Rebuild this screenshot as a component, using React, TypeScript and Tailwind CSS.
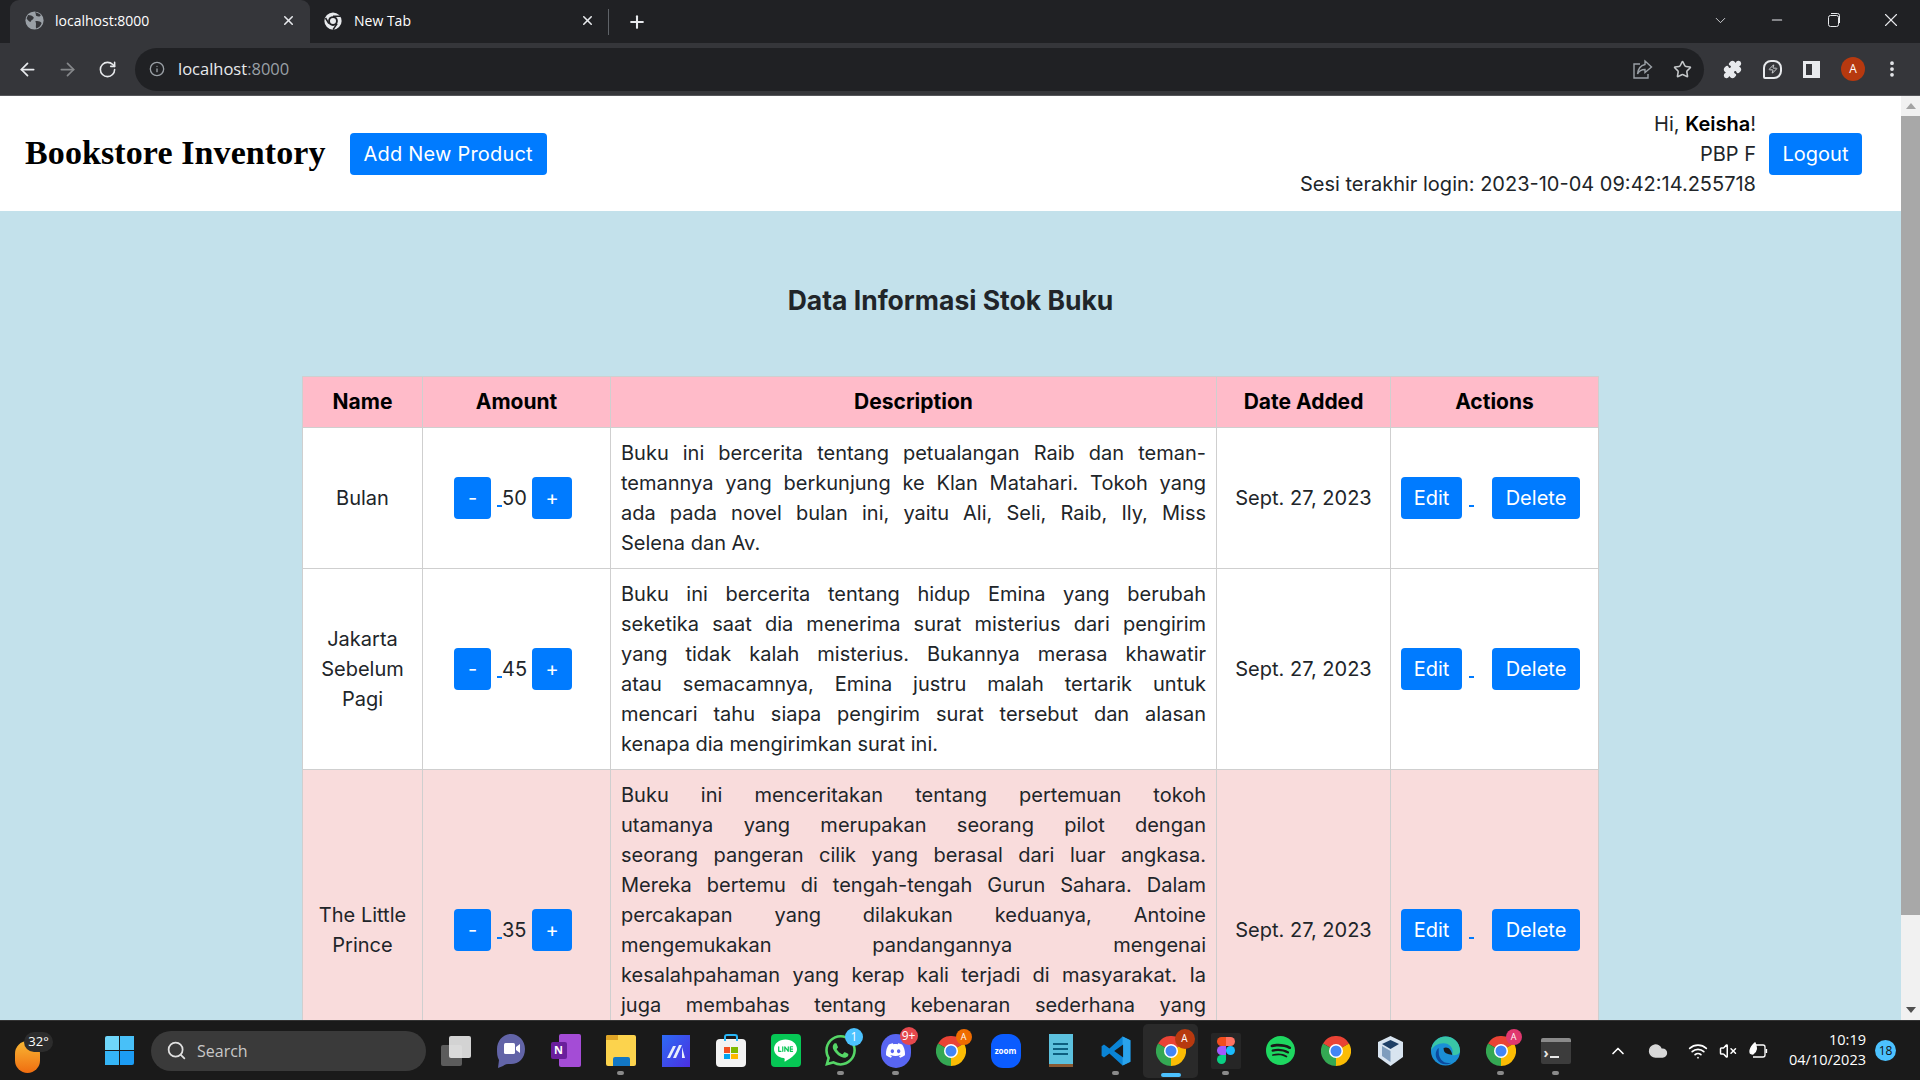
import React from 'react';
import {
    ArrowLeft, ArrowRight, RotateCw, Info, Star, Puzzle, EllipsisVertical, Minus, X, ChevronDown, Plus,
    Search, ChevronUp, Wifi, VolumeX, Cloud, Zap,
} from 'lucide-react';
import { SiDiscord, SiLine, SiSpotify, SiWhatsapp } from 'react-icons/si';

const books = [
    {
        name: ['Bulan'],
        amount: 50,
        lines: [
            'Buku ini bercerita tentang petualangan Raib dan teman-',
            'temannya yang berkunjung ke Klan Matahari. Tokoh yang',
            'ada pada novel bulan ini, yaitu Ali, Seli, Raib, Ily, Miss',
            'Selena dan Av.',
        ],
        rowClass: 'bg-white',
    },
    {
        name: ['Jakarta', 'Sebelum', 'Pagi'],
        amount: 45,
        lines: [
            'Buku ini bercerita tentang hidup Emina yang berubah',
            'seketika saat dia menerima surat misterius dari pengirim',
            'yang tidak kalah misterius. Bukannya merasa khawatir',
            'atau semacamnya, Emina justru malah tertarik untuk',
            'mencari tahu siapa pengirim surat tersebut dan alasan',
            'kenapa dia mengirimkan surat ini.',
        ],
        rowClass: 'bg-white',
    },
    {
        name: ['The Little', 'Prince'],
        amount: 35,
        lines: [
            'Buku ini menceritakan tentang pertemuan tokoh',
            'utamanya yang merupakan seorang pilot dengan',
            'seorang pangeran cilik yang berasal dari luar angkasa.',
            'Mereka bertemu di tengah-tengah Gurun Sahara. Dalam',
            'percakapan yang dilakukan keduanya, Antoine',
            'mengemukakan pandangannya mengenai',
            'kesalahpahaman yang kerap kali terjadi di masyarakat. Ia',
            'juga membahas tentang kebenaran sederhana yang',
            'sering dilupakan oleh orang dewasa dalam',
            'kehidupan sehari-hari.',
        ],
        rowClass: 'bg-[#f9dcdc]',
    },
];

const cellBorder = 'border border-[#cfcfcf]';

const BlueButton: React.FC<{ className?: string; children: React.ReactNode }> = ({ className = '', children }) => (
    <button className={`h-[42px] bg-[#007bff] text-white rounded-[4px] text-[20px] leading-[30px] flex items-center justify-center shrink-0 ${className}`}>
        {children}
    </button>
);

const LinkGap: React.FC<{ className?: string }> = ({ className = '' }) => (
    <span className={`self-end h-[2px] bg-[#007bff] mb-[12px] shrink-0 ${className}`} />
);

const ChromeLogo: React.FC<{ size?: number }> = ({ size = 30 }) => (
    <svg width={size} height={size} viewBox="0 0 24 24">
        <path d="M12 12 L1.6 6 A12 12 0 0 1 22.4 6 Z" fill="#ea4335" />
        <path d="M12 12 L22.4 6 A12 12 0 0 1 12 24 Z" fill="#fbbc04" />
        <path d="M12 12 L12 24 A12 12 0 0 1 1.6 6 Z" fill="#34a853" />
        <circle cx="12" cy="12" r="5.6" fill="#fff" />
        <circle cx="12" cy="12" r="4.4" fill="#4285f4" />
    </svg>
);

const ChromeBadge: React.FC<{ color: string; text?: string; big?: boolean }> = ({ color, text = 'A', big }) => (
    <div className="relative">
        <ChromeLogo />
        <span
            className={`absolute flex items-center justify-center rounded-full text-white font-['Open_Sans',sans-serif] ${big ? '-top-[7px] -right-[9px] w-[20px] h-[20px] text-[10px]' : '-top-[7px] -right-[6px] w-[16px] h-[16px] text-[9px]'}`}
            style={{ backgroundColor: color }}
        >
            {text}
        </span>
    </div>
);

const CountBadge: React.FC<{ color: string; text: string }> = ({ color, text }) => (
    <span
        className="absolute -top-[7px] -right-[7px] min-w-[18px] h-[18px] px-[2px] rounded-full flex items-center justify-center text-white text-[12px] font-['Open_Sans',sans-serif]"
        style={{ backgroundColor: color }}
    >
        {text}
    </span>
);

const TaskSlot: React.FC<{ children: React.ReactNode; dot?: boolean; active?: boolean }> = ({ children, dot, active }) => (
    <div className={`relative w-[55px] h-[54px] flex items-center justify-center shrink-0 rounded-[5px] ${active ? 'bg-[#2a2a2a]' : ''}`}>
        {children}
        {dot && <span className="absolute bottom-[3px] w-[7px] h-[4px] rounded-full bg-[#8a8a8a]" />}
        {active && <span className="absolute bottom-[1px] w-[20px] h-[4px] rounded-full bg-[#4cc2ff]" />}
    </div>
);

const BrowserChrome = () => (
    <div className="shrink-0 font-['Open_Sans',sans-serif]">
        <div className="h-[43px] bg-[#202124] flex items-end text-white relative">
            <div className="ml-[10px] w-[300px] h-[43px] bg-[#35363a] rounded-t-[9px] flex items-center pl-[15px] pr-[14px] pb-[2px] text-[14px]">
                <svg width="19" height="19" viewBox="0 0 24 24" className="shrink-0">
                    <circle cx="12" cy="12" r="11.5" fill="#9aa0a6" />
                    <path d="M4 5 C7 5 9 6 11 8 C11 11 8 11 7 14 C5 13 3 11 2 9 Z M13 1 C15 3 18 3 20 5 C19 8 16 7 14 6 Z M13 13 C16 12 19 13 21 15 C20 19 17 21 14 22 C13 19 15 16 13 13 Z" fill="#35363a" />
                </svg>
                <span className="ml-[11px] flex-1">localhost:8000</span>
                <X size={15} strokeWidth={2.5} className="text-[#e8eaed]" />
            </div>
            <div className="w-[298px] h-[43px] flex items-center pl-[14px] pr-[13px] pb-[2px] text-[14px]">
                <svg width="18" height="18" viewBox="0 0 24 24" className="shrink-0">
                    <circle cx="12" cy="12" r="11.5" fill="#e8eaed" />
                    <circle cx="12" cy="12" r="6.5" fill="#202124" />
                    <circle cx="12" cy="12" r="4" fill="#e8eaed" />
                    <path d="M12 5.5 H22 M6.5 15.5 L2 8 M17.5 15.5 L12 23.5" stroke="#202124" strokeWidth="2" />
                </svg>
                <span className="ml-[12px] flex-1">New Tab</span>
                <X size={15} strokeWidth={2.5} className="text-[#e8eaed]" />
            </div>
            <span className="w-px h-[26px] bg-[#5f6368] self-center" />
            <Plus size={20} strokeWidth={2.5} className="ml-[18px] self-center text-[#e8eaed]" />
            <div className="flex-1" />
            <div className="flex items-center self-center text-[#e8eaed] pb-[3px]">
                <ChevronDown size={17} strokeWidth={1.2} />
                <Minus size={16} strokeWidth={1.6} className="ml-[40px]" />
                <svg width="14" height="16" viewBox="0 0 14 16" fill="none" stroke="#e8eaed" className="ml-[42px]">
                    <rect x="1.5" y="3.5" width="10" height="11" rx="2" />
                    <path d="M4 1.5 H10.5 A2 2 0 0 1 12.5 3.5 V11" />
                </svg>
                <X size={22} strokeWidth={1.2} className="ml-[39px] mr-[18px]" />
            </div>
        </div>
        <div className="h-[53px] bg-[#35363a] border-b border-[#55565a] flex items-center text-[#e8eaed]">
            <ArrowLeft size={21} className="ml-[17px]" />
            <ArrowRight size={21} className="ml-[19px] text-[#85878a]" />
            <RotateCw size={19} className="ml-[20px]" />
            <div className="ml-[18px] w-[1569px] h-[43px] bg-[#202124] rounded-full flex items-center">
                <Info size={16} className="ml-[14px] text-[#9aa0a6]" />
                <span className="ml-[13px] text-[16.5px]">localhost<span className="text-[#9aa0a6]">:8000</span></span>
                <div className="flex-1" />
                <svg width="21" height="21" viewBox="0 0 21 21" fill="none" stroke="#9aa0a6" strokeWidth="1.4">
                    <path d="M8 5 H2 V19 H16 V15" />
                    <path d="M13 2 L19.5 8 L13 13.5 V10.5 C9.5 10.5 7 12 5.5 15 C6 10 8.5 6.5 13 5.5 Z" />
                </svg>
                <Star size={19} className="ml-[20px] mr-[12px] text-[#c4c7c9]" />
            </div>
            <Puzzle size={19} className="ml-[19px] fill-[#e8eaed]" />
            <div className="ml-[21px] relative w-[19px] h-[19px] rounded-[8px_8px_8px_2px] border-2 border-[#e8eaed] flex items-center justify-center">
                <Zap size={10} />
            </div>
            <div className="ml-[21px] w-[17px] h-[17px] border-[3px] border-[#e8eaed] border-r-[8px]" />
            <div className="ml-[21px] w-[24px] h-[24px] rounded-full bg-[#b7390f] flex items-center justify-center text-[12px] text-white">A</div>
            <EllipsisVertical size={20} strokeWidth={2.5} className="ml-[17px]" />
        </div>
    </div>
);

const Navbar = () => (
    <nav className="h-[115px] bg-white flex items-center pl-[25px] pr-[39px] shrink-0">
        <h1 className="font-['Liberation_Serif',serif] font-bold text-[34px] tracking-[0.1px] text-black leading-none mb-[2px]">Bookstore Inventory</h1>
        <BlueButton className="ml-[24px] w-[197px] tracking-[0.2px]">Add New Product</BlueButton>
        <div className="flex-1" />
        <div className="text-right text-[20px] leading-[30px] text-[#212529] mr-[13px]">
            <div>Hi, <b className="text-black font-semibold">Keisha</b>!</div>
            <div>PBP F</div>
            <div>Sesi terakhir login: 2023-10-04 09:42:14.255718</div>
        </div>
        <BlueButton className="w-[93px]">Logout</BlueButton>
    </nav>
);

const InventoryTable = () => (
    <table className="w-[1296px] ml-[302px] table-fixed border-collapse text-[20px] leading-[30px] text-[#212529]">
        <colgroup>
            <col className="w-[120px]" />
            <col className="w-[188px]" />
            <col className="w-[606px]" />
            <col className="w-[174px]" />
            <col className="w-[208px]" />
        </colgroup>
        <thead>
            <tr className="bg-[#ffbbc9] h-[51px] text-black">
                {['Name', 'Amount', 'Description', 'Date Added', 'Actions'].map(h => (
                    <th key={h} className={`${cellBorder} font-bold text-center text-[21px]`}>{h}</th>
                ))}
            </tr>
        </thead>
        <tbody>
            {books.map(book => (
                <tr key={book.amount} className={book.rowClass}>
                    <td className={`${cellBorder} text-center`}>
                        {book.name.map(n => <div key={n}>{n}</div>)}
                    </td>
                    <td className={cellBorder}>
                        <div className="flex items-center pl-[31px]">
                            <BlueButton className="w-[37px]">-</BlueButton>
                            <LinkGap className="w-[5px] ml-[6px]" />
                            <span className="w-[30px] text-left">{book.amount}</span>
                            <BlueButton className="w-[40px]">+</BlueButton>
                        </div>
                    </td>
                    <td className={`${cellBorder} p-[10px]`}>
                        {book.lines.map((line, i) => (
                            <div key={i} className={i === book.lines.length - 1 ? 'text-left' : 'text-justify [text-align-last:justify]'}>{line}</div>
                        ))}
                    </td>
                    <td className={`${cellBorder} text-center`}>Sept. 27, 2023</td>
                    <td className={cellBorder}>
                        <div className="flex items-center pl-[10px]">
                            <BlueButton className="w-[61px]">Edit</BlueButton>
                            <LinkGap className="w-[5px] ml-[7px]" />
                            <BlueButton className="w-[88px] ml-[18px]">Delete</BlueButton>
                        </div>
                    </td>
                </tr>
            ))}
        </tbody>
    </table>
);

const Scrollbar = () => (
    <div className="w-[19px] bg-[#f1f1f1] flex flex-col items-stretch shrink-0">
        <div className="h-[20px] flex items-center justify-center">
            <div className="w-0 h-0 border-x-[5px] border-x-transparent border-b-[6px] border-b-[#a3a3a3]" />
        </div>
        <div className="h-[799px] bg-[#a8a8a8]" />
        <div className="flex-1" />
        <div className="h-[20px] flex items-center justify-center">
            <div className="w-0 h-0 border-x-[5px] border-x-transparent border-t-[6px] border-t-[#505050]" />
        </div>
    </div>
);

const Taskbar = () => (
    <div className="h-[60px] bg-[#1a1a1a] border-t border-[#333] flex items-center shrink-0 font-['Open_Sans',sans-serif] text-white">
        <div className="relative w-[105px] h-full shrink-0">
            <div className="absolute left-[15px] top-[20px] w-[25px] h-[32px] rounded-full bg-gradient-to-b from-[#f7b733] to-[#ef6c0f]" />
            <span className="absolute left-[24px] top-[11px] w-[29px] h-[20px] rounded-full bg-[#2c2c2c] flex items-center justify-center text-[13px]">32°</span>
        </div>
        <div className="w-[29px] h-[29px] grid grid-cols-2 grid-rows-2 gap-[1px] shrink-0">
            <span className="bg-[#6fd6fa] rounded-tl-[2px]" />
            <span className="bg-[#48c0f8]" />
            <span className="bg-[#35b5f6]" />
            <span className="bg-[#1c9cf4] rounded-br-[2px]" />
        </div>
        <div className="ml-[17px] w-[275px] h-[40px] rounded-full bg-[#3a3a3a] flex items-center pl-[15px] text-[#c8c8c8] text-[16px] shrink-0">
            <Search size={21} className="text-[#e0e0e0]" />
            <span className="ml-[10px]">Search</span>
        </div>
        <div className="flex items-center ml-[2px]">
            <TaskSlot>
                <div className="relative w-[30px] h-[30px]">
                    <span className="absolute left-0 bottom-0 w-[21px] h-[21px] bg-[#5c5c5c] rounded-[2px]" />
                    <span className="absolute right-0 top-0 w-[22px] h-[22px] bg-[#e8e8e8] rounded-[2px] opacity-90" />
                </div>
            </TaskSlot>
            <TaskSlot>
                <svg width="30" height="36" viewBox="0 0 30 36">
                    <path d="M15 1 C23 1 29 8 29 16 C29 25 23 31 15 31 C12 31 9 31 7 33 L2 35 L3 27 C1 24 1 20 1 16 C1 8 7 1 15 1 Z" fill="#6264a7" />
                    <rect x="8" y="10" width="11" height="11" rx="1.5" fill="#fff" />
                    <path d="M20 14 L24 11 V20 L20 17 Z" fill="#fff" />
                </svg>
            </TaskSlot>
            <TaskSlot>
                <div className="relative w-[30px] h-[33px] flex justify-end">
                    <span className="w-[22px] h-full bg-[#a44cd6] rounded-[2px]" />
                    <span className="absolute left-0 top-[8px] w-[16px] h-[17px] bg-[#6a1f9c] rounded-[2px] flex items-center justify-center text-[11px] font-bold">N</span>
                </div>
            </TaskSlot>
            <TaskSlot dot>
                <div className="relative w-[30px] h-[31px] rounded-[2px] bg-[#fcd34d] overflow-hidden">
                    <span className="absolute left-0 top-0 w-[12px] h-[5px] bg-[#e0a526]" />
                    <span className="absolute left-[7px] bottom-0 w-[17px] h-[9px] bg-[#1277c4] rounded-t-[2px]" />
                </div>
            </TaskSlot>
            <TaskSlot>
                <svg width="28" height="32" viewBox="0 0 28 32">
                    <defs>
                        <linearGradient id="mi" x1="0" y1="0" x2="1" y2="1">
                            <stop offset="0" stopColor="#2d6bf5" />
                            <stop offset="1" stopColor="#4b2fe0" />
                        </linearGradient>
                    </defs>
                    <rect width="28" height="32" fill="url(#mi)" />
                    <path d="M5 23 L11 11 H14 L8 23 Z M11 23 L17 10 H20 L14 23 Z" fill="#e8eefc" />
                    <path d="M20 12 L23 23 H20 Z" fill="#e8eefc" />
                </svg>
            </TaskSlot>
            <TaskSlot>
                <div className="relative w-[30px] h-[28px] mt-[5px] bg-[#f3f3f3] rounded-[4px] grid grid-cols-2 gap-[1px] p-[8px]">
                    <span className="bg-[#f25022]" />
                    <span className="bg-[#7fba00]" />
                    <span className="bg-[#00a4ef]" />
                    <span className="bg-[#ffb900]" />
                    <span className="absolute -top-[5px] left-[8px] w-[14px] h-[7px] border-2 border-b-0 border-[#29b6f6] rounded-t-[3px]" />
                </div>
            </TaskSlot>
            <TaskSlot>
                <div className="w-[30px] h-[33px] rounded-[4px] bg-[#06c755] flex items-center justify-center">
                    <SiLine size={23} className="text-white" />
                </div>
            </TaskSlot>
            <TaskSlot dot>
                <div className="relative">
                    <SiWhatsapp size={31} className="text-[#55d666]" />
                    <CountBadge color="#4cc2ff" text="1" />
                </div>
            </TaskSlot>
            <TaskSlot dot>
                <div className="relative w-[30px] h-[34px] rounded-full bg-[#5865f2] flex items-center justify-center">
                    <SiDiscord size={19} className="text-white" />
                    <CountBadge color="#e5484d" text="9+" />
                </div>
            </TaskSlot>
            <TaskSlot><ChromeBadge color="#ef6c00" /></TaskSlot>
            <TaskSlot>
                <div className="w-[30px] h-[34px] rounded-[12px] bg-[#0b5cff] flex items-center justify-center text-[8px] font-bold">zoom</div>
            </TaskSlot>
            <TaskSlot>
                <div className="w-[24px] h-[33px] bg-[#5cc1de] flex flex-col items-center justify-center gap-[3px] border-b-[3px] border-[#8a5a33]">
                    <span className="w-[15px] h-[2px] bg-[#0d5f80]" />
                    <span className="w-[15px] h-[2px] bg-[#0d5f80]" />
                    <span className="w-[15px] h-[2px] bg-[#0d5f80]" />
                </div>
            </TaskSlot>
            <TaskSlot dot>
                <svg width="30" height="32" viewBox="0 0 100 100">
                    <path d="M72 2 L98 14 V86 L72 98 L28 58 L10 72 L2 66 V34 L10 28 L28 42 Z M74 28 L44 50 L74 72 Z" fill="#0a84d6" fillRule="evenodd" />
                    <path d="M72 2 L98 14 V86 L72 98 V72 L74 72 V28 L72 28 Z" fill="#2aa3ec" />
                </svg>
            </TaskSlot>
            <TaskSlot active><ChromeBadge color="#b7390f" big /></TaskSlot>
            <TaskSlot dot>
                <div className="w-[30px] h-[36px] bg-[#262626] flex items-center justify-center rounded-[2px]">
                    <svg width="18" height="27" viewBox="0 0 24 36">
                        <path d="M6 0 H12 V12 H6 A6 6 0 0 1 6 0 Z" fill="#f24e1e" />
                        <path d="M12 0 H18 A6 6 0 0 1 18 12 H12 Z" fill="#ff7262" />
                        <path d="M0 18 A6 6 0 0 1 6 12 H12 V24 H6 A6 6 0 0 1 0 18 Z" fill="#a259ff" />
                        <circle cx="18" cy="18" r="6" fill="#1abcfe" />
                        <path d="M0 30 A6 6 0 0 1 6 24 H12 V30 A6 6 0 0 1 0 30 Z" fill="#0acf83" />
                    </svg>
                </div>
            </TaskSlot>
            <TaskSlot><SiSpotify size={29} className="text-[#1ed760]" /></TaskSlot>
            <TaskSlot><ChromeLogo /></TaskSlot>
            <TaskSlot>
                <svg width="27" height="32" viewBox="0 0 27 32">
                    <path d="M13.5 1 L26 7 V22 L13.5 31 L1 22 V7 Z" fill="#d8e4f0" />
                    <path d="M13.5 5 L22 9 L13.5 14 L5 9 Z" fill="#1e3f66" />
                    <path d="M13.5 16 V27 L5 21 V11 Z" fill="#7f9dbd" />
                </svg>
            </TaskSlot>
            <TaskSlot>
                <svg width="31" height="34" viewBox="0 0 32 32">
                    <circle cx="16" cy="16" r="15" fill="#1b8fd6" />
                    <path d="M1 16 C2 6 9 1 16 1 C24 1 31 7 31 16 C31 19 27 21 23 20 C25 13 20 8 14 8 C8 8 3 11 1 16 Z" fill="#39c6a6" />
                    <path d="M9 17 C9 24 14 30 22 28 C17 31 10 30 7 24 C5 20 6 15 9 13 Z" fill="#0c4a9e" />
                    <path d="M14 13 C18 11 22 14 23 20 C18 19 14 19 14 13 Z" fill="#1a1a1a" />
                </svg>
            </TaskSlot>
            <TaskSlot dot><ChromeBadge color="#e0386f" /></TaskSlot>
            <TaskSlot dot>
                <div className="w-[30px] h-[26px] bg-[#3c3c3c] rounded-[2px] border-t-[4px] border-[#8b8b8b] flex items-center pl-[3px] gap-[1px] text-[#e8e8e8]">
                    <span className="text-[14px] font-bold leading-none">›</span>
                    <span className="w-[9px] h-[2px] bg-[#e8e8e8] mt-[8px]" />
                </div>
            </TaskSlot>
        </div>
        <ChevronUp size={20} className="ml-[25px]" />
        <Cloud size={20} className="ml-[20px] fill-[#d8d8d8] text-[#d8d8d8]" />
        <Wifi size={20} className="ml-[20px]" />
        <VolumeX size={18} className="ml-[11px]" />
        <svg width="20" height="18" viewBox="0 0 20 18" fill="none" stroke="#fff" strokeWidth="1.3" className="ml-[11px]">
            <path d="M8 3 H15 A2 2 0 0 1 17 5 V13 A2 2 0 0 1 15 15 H5 M18.5 7 V11" />
            <path d="M2 10 C2 5 5 3 7 1 C9 5 9 10 5 12 C4 12 2 12 2 10 Z" fill="#fff" />
        </svg>
        <div className="flex-1 text-right text-[14.5px] leading-[20px] text-white pb-[2px]">
            <div>10:19</div>
            <div>04/10/2023</div>
        </div>
        <span className="ml-[9px] mr-[24px] w-[21px] h-[21px] rounded-full bg-[#4cc2ff] text-[#111] text-[12px] flex items-center justify-center">18</span>
    </div>
);

const App: React.FC = () => (
    <div className="w-[1920px] h-[1080px] overflow-hidden flex flex-col font-['Inter',sans-serif]">
        <BrowserChrome />
        <div className="flex-1 min-h-0 flex">
            <div className="flex-1 min-w-0 flex flex-col bg-[#c3e1eb] overflow-hidden">
                <Navbar />
                <main className="pt-[71px]">
                    <h2 className="text-center text-[26.5px] leading-[36px] font-bold text-[#212529] mb-[58px]">Data Informasi Stok Buku</h2>
                    <InventoryTable />
                </main>
            </div>
            <Scrollbar />
        </div>
        <Taskbar />
    </div>
);

export default App;
